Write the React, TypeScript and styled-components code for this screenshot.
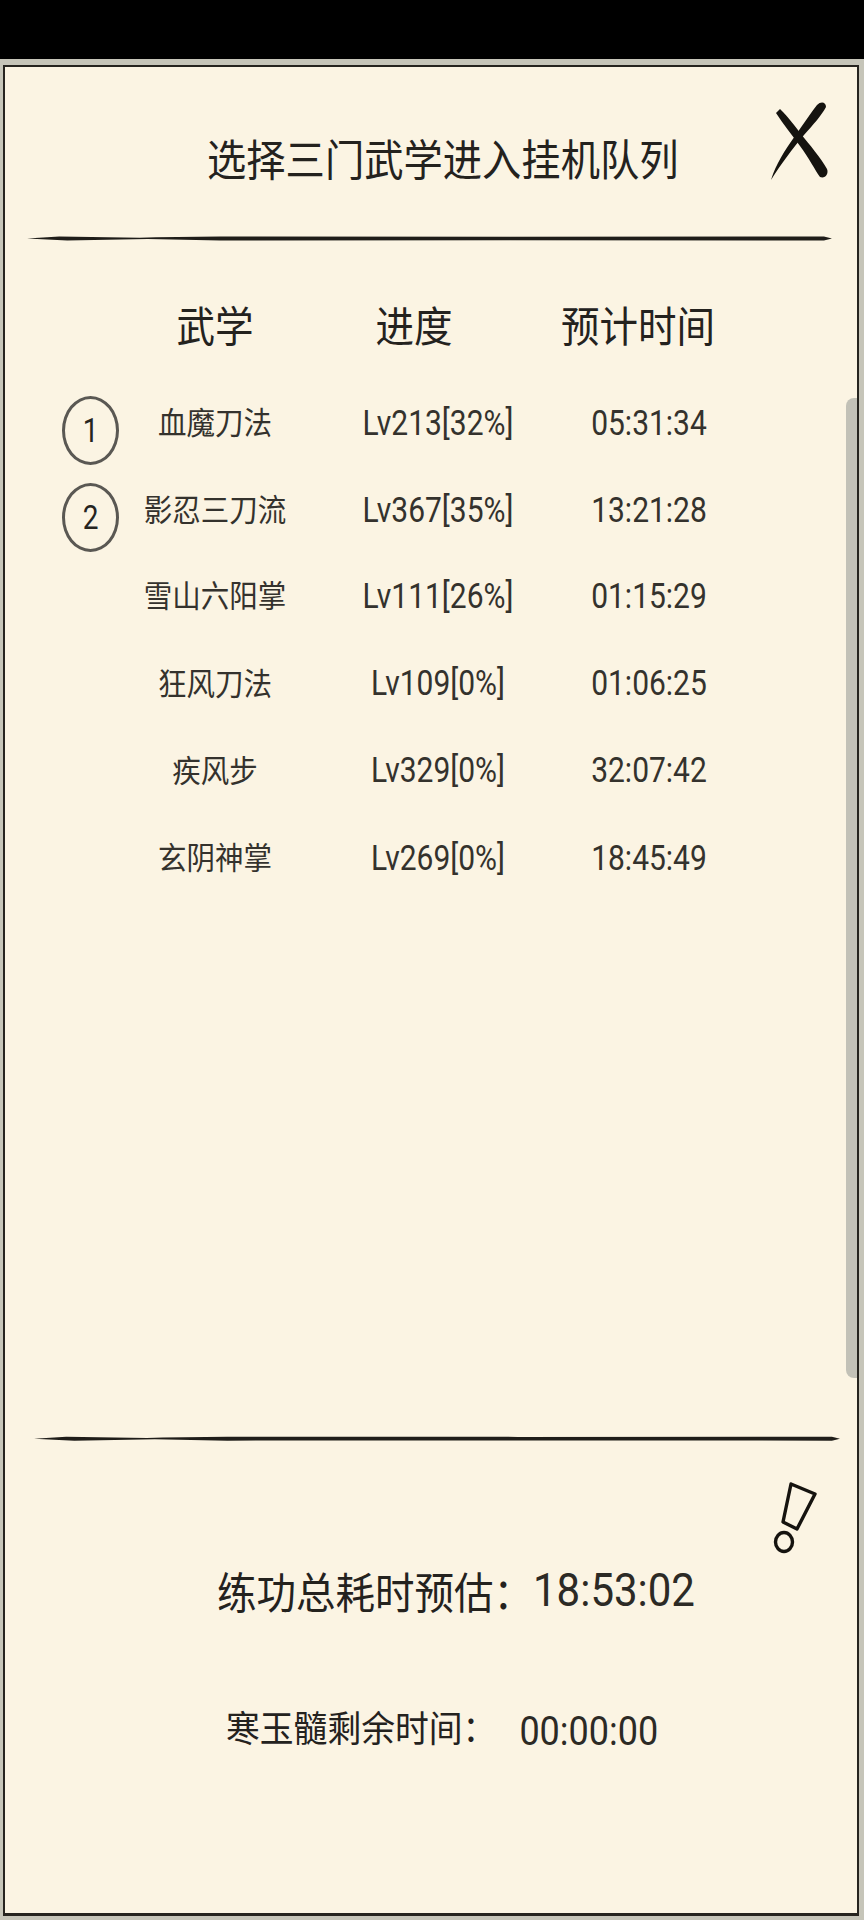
import React from "react";
import styled, { createGlobalStyle } from "styled-components";

const Global = createGlobalStyle`
  html, body { margin: 0; padding: 0; background: #000; }
  body { font-family: Roboto, "Noto Sans CJK SC", sans-serif; color: #1d1b18; }
  * { box-sizing: border-box; }
`;

const Screen = styled.div`
  width: 864px;
  height: 1920px;
  display: flex;
  flex-direction: column;
  background: #000;
  overflow: hidden;
`;

const TopBar = styled.div`
  height: 59px;
  flex: none;
  background: #000;
`;

const Frame = styled.div`
  flex: 1;
  display: flex;
  padding: 6px 5px 4px 3px;
  background: #c6c5b9;
`;

const Panel = styled.main`
  position: relative;
  flex: 1;
  display: flex;
  flex-direction: column;
  border: 2px solid #26241f;
  border-bottom-width: 3px;
  background: #fbf4e3;
`;

const Header = styled.header`
  height: 171px;
  flex: none;
  display: flex;
  align-items: flex-start;
  padding-left: 202px;
`;

const Title = styled.h1`
  margin: 72px 0 0;
  width: 472px;
  font-size: 39.3px;
  line-height: 46px;
  font-weight: 400;
  white-space: nowrap;
  color: #24221e;
  transform: scaleY(1.1);
`;

const CloseIcon = styled.svg`
  margin: 31px 0 0 88px;
  width: 64px;
  height: 84px;
  flex: none;
`;

const Rule = styled.div<{ $left: number; $width: number; $top?: number }>`
  flex: none;
  height: 5px;
  margin-top: ${(p) => p.$top ?? -2}px;
  margin-left: ${(p) => p.$left}px;
  width: ${(p) => p.$width}px;
  background: #1f1d19;
  clip-path: polygon(0 50%, 4% 10%, 14% 35%, 16% 25%, 24% 10%, 60% 15%, 99% 10%, 100% 50%, 99% 90%, 60% 85%, 24% 90%, 15% 60%, 5% 90%);
`;

const TableHead = styled.div`
  flex: none;
  display: grid;
  grid-template-columns: 114px 192px 206px 242px;
  margin-top: 62px;
  height: 50px;
  align-items: center;
`;

const HeadCell = styled.div`
  font-size: 38.5px;
  line-height: 50px;
  font-weight: 400;
  text-align: center;
  white-space: nowrap;
  color: #24221e;
  transform: scaleY(1.1);
  &:first-child { grid-column: 2; }
`;

const Rows = styled.div`
  flex: none;
  margin-top: 23px;
  display: flex;
  flex-direction: column;
`;

const Row = styled.div`
  height: 87.2px;
  display: grid;
  grid-template-columns: 57px 57px 192px 254px 168px;
  align-items: center;
`;

const Badge = styled.div`
  grid-column: 2 / 2;
  width: 57px;
  height: 69px;
  margin-top: 20px;
  border: 3px solid #5a5853;
  border-radius: 50%;
  display: flex;
  align-items: center;
  justify-content: center;
  color: #26241f;
`;

const BadgeDigit = styled.span`
  font-size: 28px;
  display: inline-block;
  transform: scaleY(1.2);
`;

const NameCell = styled.div`
  grid-column: 3;
  font-size: 28.5px;
  font-weight: 400;
  text-align: center;
  white-space: nowrap;
  color: #34322d;
  transform: scaleY(1.08);
`;

const NumberCell = styled.div`
  margin-top: 3px;
  font-size: 30px;
  font-weight: 400;
  text-align: center;
  white-space: nowrap;
  color: #34322d;
  transform: scaleY(1.15);
`;

const Scrollbar = styled.div`
  position: absolute;
  top: 331px;
  right: 0;
  width: 11px;
  height: 980px;
  background: #c2c1b7;
  border-radius: 8px 0 0 8px;
`;

const Footer = styled.footer`
  flex: 1;
  display: flex;
  flex-direction: column;
`;

const Alert = styled.svg`
  align-self: flex-end;
  margin: 39px 38px 0 0;
  width: 46px;
  height: 78px;
  flex: none;
`;

const TotalLine = styled.div`
  margin: 2px 0 0 212px;
  display: flex;
  align-items: center;
  height: 60px;
  font-size: 39.5px;
  font-weight: 400;
  white-space: nowrap;
  color: #24221e;
`;

const Stretch = styled.span`
  display: inline-block;
  transform: scaleY(1.08);
`;

const BigNumber = styled(Stretch)`
  font-size: 42px;
  font-weight: 400;
  color: #2c2a25;
`;

const RemainLine = styled.div`
  margin: 81px 0 0 221px;
  display: flex;
  align-items: center;
  height: 50px;
  font-size: 33.8px;
  font-weight: 400;
  white-space: nowrap;
  color: #24221e;
`;

const RemainNumber = styled(Stretch)`
  font-size: 36px;
  font-weight: 400;
  margin-left: 23px;
  margin-top: 10px;
  color: #2c2a25;
  transform: scaleY(1.14);
`;

const data = [
  { rank: "1", name: "血魔刀法", level: "Lv213[32%]", time: "05:31:34" },
  { rank: "2", name: "影忍三刀流", level: "Lv367[35%]", time: "13:21:28" },
  { name: "雪山六阳掌", level: "Lv111[26%]", time: "01:15:29" },
  { name: "狂风刀法", level: "Lv109[0%]", time: "01:06:25" },
  { name: "疾风步", level: "Lv329[0%]", time: "32:07:42" },
  { name: "玄阴神掌", level: "Lv269[0%]", time: "18:45:49" },
];

export default function App() {
  return (
    <Screen>
      <Global />
      <TopBar />
      <Frame>
        <Panel>
          <Header>
            <Title>选择三门武学进入挂机队列</Title>
            <CloseIcon viewBox="0 0 64 84" aria-label="关闭">
              <path
                d="M9 15 L13 11 C22 20 28 28 34 36 C42 46 54 60 60 71 C62 76 58 81 53 79 C48 72 42 60 33 48 C25 37 16 26 9 15 Z"
                fill="#15130f"
              />
              <path
                d="M50 7 C54 3 59 4 59 9 C54 18 46 27 37 37 C26 50 14 66 4 82 C9 66 18 52 28 38 C35 28 43 16 50 7 Z"
                fill="#15130f"
              />
            </CloseIcon>
          </Header>
          <Rule $left={22} $width={805} />
          <TableHead>
            <HeadCell>武学</HeadCell>
            <HeadCell>进度</HeadCell>
            <HeadCell>预计时间</HeadCell>
          </TableHead>
          <Rows>
            {data.map((d) => (
              <Row key={d.name}>
                {d.rank ? (
                  <Badge>
                    <BadgeDigit>{d.rank}</BadgeDigit>
                  </Badge>
                ) : null}
                <NameCell>{d.name}</NameCell>
                <NumberCell>{d.level}</NumberCell>
                <NumberCell>{d.time}</NumberCell>
              </Row>
            ))}
          </Rows>
          <Scrollbar />
          <Rule $left={29} $width={806} $top={537} />
          <Footer>
            <Alert viewBox="0 0 46 78" aria-label="提示">
              <path d="M18 4 L42 14 L24 49 L10 42 Z" fill="none" stroke="#15130f" strokeWidth="3.4" strokeLinejoin="round" />
              <ellipse cx="11" cy="62" rx="8.5" ry="9.5" fill="none" stroke="#15130f" strokeWidth="3.4" />
            </Alert>
            <TotalLine>
              <Stretch>练功总耗时预估：</Stretch>
              <BigNumber>18:53:02</BigNumber>
            </TotalLine>
            <RemainLine>
              <Stretch>寒玉髓剩余时间：</Stretch>
              <RemainNumber>00:00:00</RemainNumber>
            </RemainLine>
          </Footer>
        </Panel>
      </Frame>
    </Screen>
  );
}
